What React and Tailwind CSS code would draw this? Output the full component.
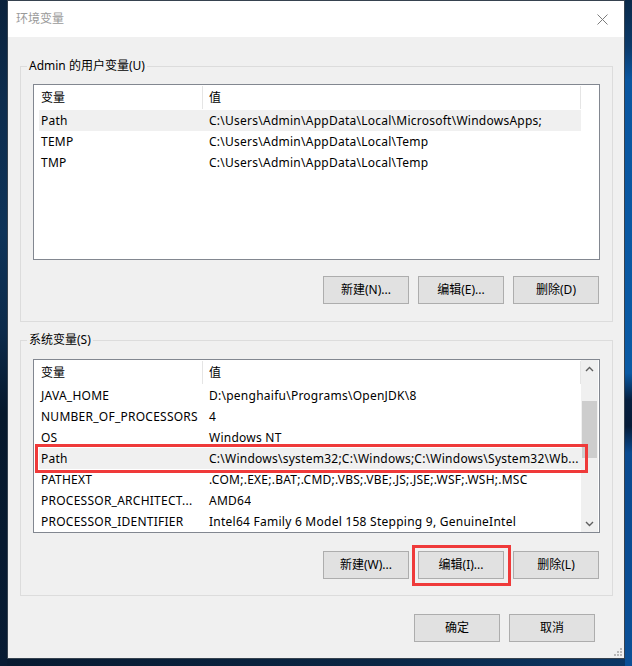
import React from "react";

const FONT = { fontFamily: '"Noto Sans", "Noto Sans CJK SC", sans-serif' };

const userVars = [
  ["Path", "C:\\Users\\Admin\\AppData\\Local\\Microsoft\\WindowsApps;", true],
  ["TEMP", "C:\\Users\\Admin\\AppData\\Local\\Temp"],
  ["TMP", "C:\\Users\\Admin\\AppData\\Local\\Temp"],
];

const sysVars = [
  ["JAVA_HOME", "D:\\penghaifu\\Programs\\OpenJDK\\8"],
  ["NUMBER_OF_PROCESSORS", "4"],
  ["OS", "Windows NT"],
  ["Path", "C:\\Windows\\system32;C:\\Windows;C:\\Windows\\System32\\Wb...", true],
  ["PATHEXT", ".COM;.EXE;.BAT;.CMD;.VBS;.VBE;.JS;.JSE;.WSF;.WSH;.MSC"],
  ["PROCESSOR_ARCHITECT...", "AMD64"],
  ["PROCESSOR_IDENTIFIER", "Intel64 Family 6 Model 158 Stepping 9, GenuineIntel"],
];

function Header() {
  return (
    <div className="flex h-[25px] w-[547px] shrink-0 bg-white text-black">
      <div className="w-[168px] pl-[7px] leading-[25px]">变量</div>
      <div className="my-[1px] w-px bg-[#e5e5e5]" />
      <div className="flex-1 pl-[6px] leading-[25px]">值</div>
      <div className="my-[1px] w-px bg-[#e5e5e5]" />
    </div>
  );
}

function Row({ name, value, sel }) {
  return (
    <div
      className={`ml-[5px] flex h-[21px] w-[542px] whitespace-nowrap leading-[21px] tracking-[0.25px] text-black ${
        sel ? "bg-[#f0f0f0]" : ""
      }`}
    >
      <div className="w-[168px] shrink-0 overflow-hidden pl-[2px]">{name}</div>
      <div className="overflow-hidden pl-[2px]">{value}</div>
    </div>
  );
}

function Button({ children, outline }) {
  return (
    <div className="relative">
      <div className="flex h-[28px] w-[86px] items-center justify-center border border-[#adadad] bg-[#e1e1e1] text-black">
        {children}
      </div>
      {outline && (
        <div className="absolute -left-[6px] -top-[6px] h-[41px] w-[99px] border-[3px] border-[#ef3a3a]" />
      )}
    </div>
  );
}

function Chevron({ up }) {
  return (
    <svg width="9" height="6" viewBox="0 0 9 6">
      <polyline
        points={up ? "1,5 4.5,1.5 8,5" : "1,1 4.5,4.5 8,1"}
        fill="none"
        stroke="#606060"
        strokeWidth="1.4"
      />
    </svg>
  );
}

function GroupBox({ label, children, pt }) {
  return (
    <div className={`relative ml-[12px] h-[256px] w-[593px] border border-[#dcdcdc] px-[12px] ${pt}`}>
      <span className="absolute -top-[9px] left-[6px] bg-[#f0f0f0] px-[2px] leading-[16px] text-black">
        {label}
      </span>
      {children}
    </div>
  );
}

export default function App() {
  return (
    <div
      className="flex h-[666px] w-[632px] overflow-hidden bg-[linear-gradient(to_right,#071a30,#0a2644_60%,#0b3766)] text-[12px]"
      style={FONT}
    >
      <div className="h-full w-[7px] shrink-0 bg-[linear-gradient(to_bottom,#0b223c_0%,#0d2c4d_15%,#0e3358_35%,#0c2a4a_50%,#06182c_62%,#081c34_100%)]" />
      <div className="relative flex h-[659px] w-[618px] shrink-0 flex-col border border-[#36424f] bg-[#f0f0f0]">
        {/* title bar */}
        <div className="flex h-[36px] items-center justify-between bg-white pl-[8px] pr-[8px]">
          <span className="text-[#9a9a9a]">环境变量</span>
          <svg width="11" height="11" viewBox="0 0 11 11" className="mr-[8px]">
            <path d="M0.5 0.5 L10.5 10.5 M10.5 0.5 L0.5 10.5" stroke="#7c7c7c" strokeWidth="1" />
          </svg>
        </div>

        <div className="pt-[29px]">
          <GroupBox label="Admin 的用户变量(U)" pt="pt-[17px]">
            <div className="flex h-[176px] flex-col border border-[#828790] bg-white">
              <Header />
              {userVars.map(([n, v, s]) => (
                <Row key={n} name={n} value={v} sel={s} />
              ))}
            </div>
            <div className="mr-[1px] mt-[16px] flex justify-end gap-[9px]">
              <Button>新建(N)...</Button>
              <Button>编辑(E)...</Button>
              <Button>删除(D)</Button>
            </div>
          </GroupBox>

          <div className="h-[18px]" />

          <GroupBox label="系统变量(S)" pt="pt-[18px]">
            <div className="relative flex h-[174px] border border-[#828790] bg-white">
              <div className="flex w-[547px] flex-col">
                <Header />
                {sysVars.map(([n, v, s]) => (
                  <Row key={n} name={n} value={v} sel={s} />
                ))}
              </div>
              <div className="flex w-[17px] flex-col items-center bg-[#f0f0f0]">
                <div className="flex h-[17px] w-full items-center justify-center">
                  <Chevron up />
                </div>
                <div className="mt-[24px] h-[57px] w-[15px] bg-[#cdcdcd]" />
                <div className="flex-1" />
                <div className="flex h-[17px] w-full items-center justify-center">
                  <Chevron />
                </div>
              </div>
              <div className="absolute left-[1px] top-[84px] h-[29px] w-[553px] border-[3px] border-[#ef3a3a]" />
            </div>
            <div className="mr-[1px] mt-[18px] flex justify-end gap-[9px]">
              <Button>新建(W)...</Button>
              <Button outline>编辑(I)...</Button>
              <Button>删除(L)</Button>
            </div>
          </GroupBox>

          <div className="mr-[29px] mt-[18px] flex justify-end gap-[9px]">
            <Button>确定</Button>
            <Button>取消</Button>
          </div>
        </div>

        {/* resize grip */}
        <div className="absolute bottom-[2px] right-[2px] grid grid-cols-3 gap-[1px]">
          <span className="h-[2px] w-[2px]" />
          <span className="h-[2px] w-[2px]" />
          <span className="h-[2px] w-[2px] bg-[#b8b8b8]" />
          <span className="h-[2px] w-[2px]" />
          <span className="h-[2px] w-[2px] bg-[#b8b8b8]" />
          <span className="h-[2px] w-[2px] bg-[#b8b8b8]" />
          <span className="h-[2px] w-[2px] bg-[#b8b8b8]" />
          <span className="h-[2px] w-[2px] bg-[#b8b8b8]" />
          <span className="h-[2px] w-[2px] bg-[#b8b8b8]" />
        </div>
      </div>
      <div className="h-full w-[7px] shrink-0 bg-[linear-gradient(to_bottom,#0a2a4a_0%,#0b3a6a_7%,#0a56a0_12%,#0a5aa4_56%,#062040_60%,#061c38_64%,#0a4a90_68%,#0a4f96_100%)]" />
    </div>
  );
}
